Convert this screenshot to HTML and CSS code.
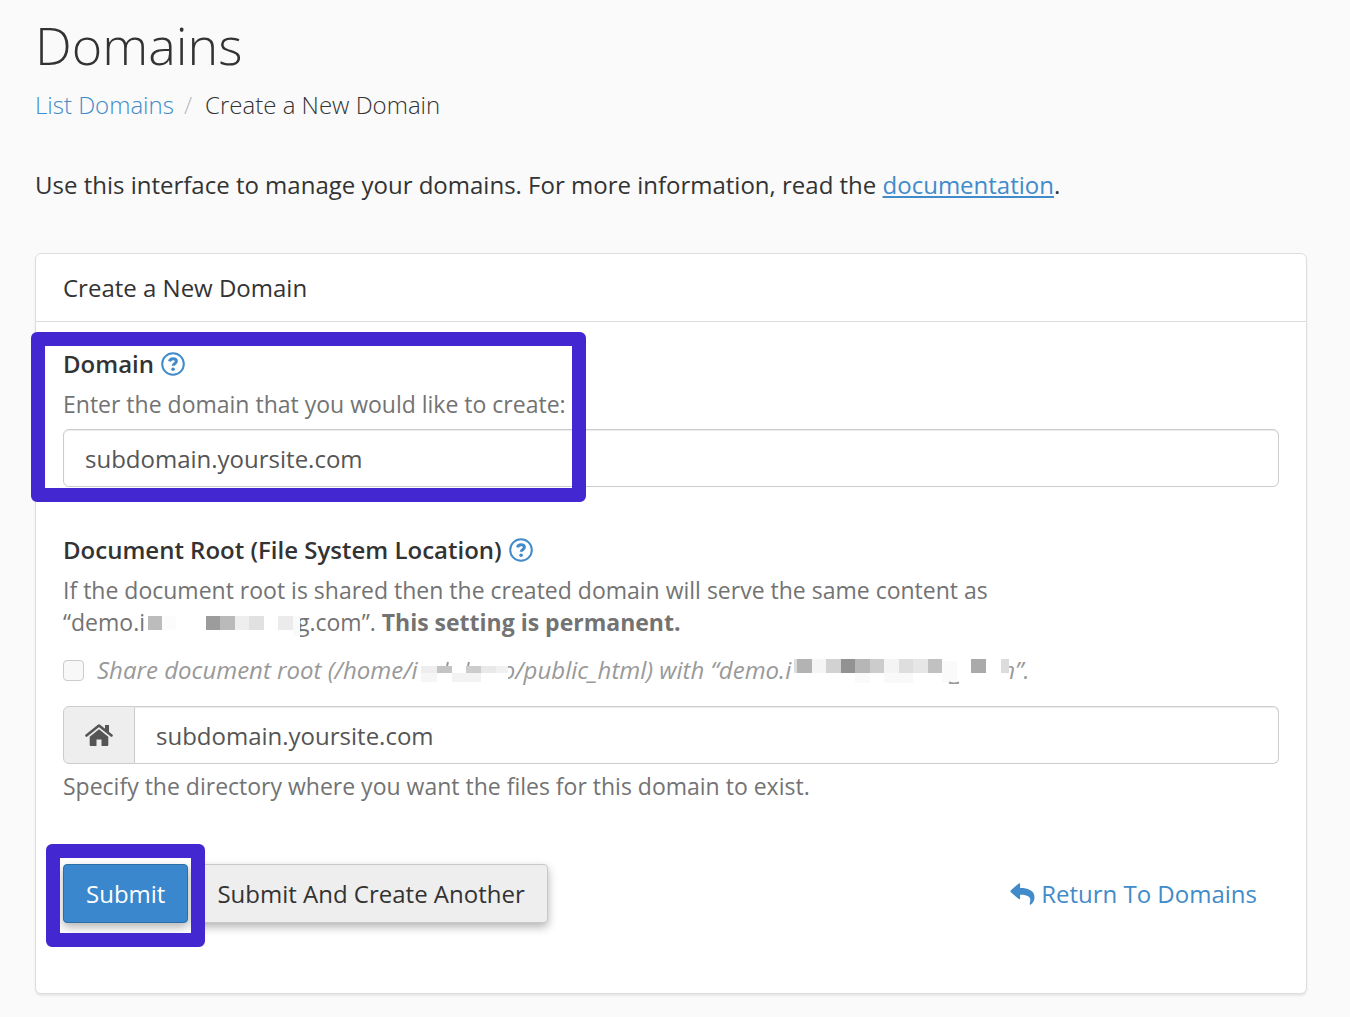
FILE: index.html
```html
<!DOCTYPE html>
<html lang="en">
<head>
  <meta charset="UTF-8" />
  <meta name="viewport" content="width=device-width, initial-scale=1.0" />
  <title>Domains</title>
  <link rel="stylesheet" href="styles.css">
</head>
<body>
  <svg class="sprite" aria-hidden="true">
    <symbol id="icon-help" viewBox="0 0 24 24">
      <circle cx="12" cy="12" r="10.8" fill="none" stroke="currentColor" stroke-width="2" />
      <path d="M8.500 9.400c.4-1.900 1.700-2.700 3.500-2.700 1.900 0 3.400 1 3.400 2.600 0 2.200-3.100 2.200-3.200 4.500" fill="none" stroke="currentColor" stroke-width="3" />
      <circle cx="12.100" cy="17.200" r="1.800" fill="currentColor" />
    </symbol>
  </svg>
  <main class="page">
    <h1>Domains</h1>
    <nav aria-label="Breadcrumb">
      <ol class="breadcrumb">
        <li><a href="#">List Domains</a></li>
        <li>Create a New Domain</li>
      </ol>
    </nav>
    <p class="intro">Use this interface to manage your domains. For more information, read the <a href="#">documentation</a>.</p>

    <section class="panel">
      <h2 class="panel-heading">Create a New Domain</h2>
      <form class="panel-body">
        <div class="form-group domain-group">
          <div class="label-row">
            <label for="domain">Domain</label>
            <a class="help" href="#" aria-label="Help: Domain"><svg><use href="#icon-help" /></svg></a>
          </div>
          <p class="help-text">Enter the domain that you would like to create:</p>
          <input class="form-control" type="text" id="domain" value="subdomain.yoursite.com" />
          <div class="highlight"></div>
        </div>

        <div class="form-group root-group">
          <div class="label-row">
            <label for="root">Document Root (File System Location)</label>
            <a class="help" href="#" aria-label="Help: Document Root"><svg><use href="#icon-help" /></svg></a>
          </div>
          <p class="help-text root-text">If the document root is shared then the created domain will serve the same content as<br />“demo.i<svg class="redact redact-site" viewBox="3 0 155 26" aria-hidden="true">
            <rect x="0" y="0" width="158" height="26" fill="#fff" />
            <rect x="6" y="3" width="14" height="14" fill="#bcbcbc" />
            <rect x="20" y="3" width="14" height="14" fill="#fcfcfc" />
            <rect x="64" y="3" width="14" height="14" fill="#9c9c9c" />
            <rect x="78" y="3" width="15" height="14" fill="#bababa" />
            <rect x="93" y="3" width="14" height="14" fill="#eee" />
            <rect x="107" y="3" width="15" height="14" fill="#e1e1e1" />
            <rect x="136" y="3" width="15" height="14" fill="#ebebeb" />
            <rect x="151" y="3" width="7" height="20" fill="#fafafa" />
          </svg>g.com”. <strong>This setting is permanent.</strong></p>
          <div class="check-row">
            <input type="checkbox" id="share" disabled />
            <label for="share">Share document root (/home/i<svg class="redact redact-home" viewBox="-2 0 90 26" aria-hidden="true">
              <rect x="-1" y="0" width="89" height="26" fill="#fff" />
              <path d="M27 8l1-4M48 8l1-4" stroke="#999" stroke-width="2" />
              <rect x="1" y="8" width="16" height="7" fill="#eee" />
              <rect x="17" y="8" width="15" height="7" fill="#c4c4c4" />
              <rect x="46" y="8" width="15" height="7" fill="#ccc" />
              <rect x="61" y="8" width="15" height="7" fill="#e9e9e9" />
              <rect x="76" y="8" width="12" height="7" fill="#f1f1f1" />
              <rect x="1" y="15" width="16" height="9" fill="#f6f6f6" />
              <rect x="32" y="15" width="29" height="9" fill="#f3f3f3" />
            </svg>o/public_html) with “demo.i<svg class="redact redact-demo" viewBox="-1 0 218 26" aria-hidden="true">
              <rect x="2" y="0" width="215" height="26" fill="#fff" />
              <rect x="2" y="1" width="3" height="14" fill="#ddd" />
              <rect x="5" y="1" width="15" height="14" fill="#b3b3b3" />
              <rect x="20" y="1" width="14" height="14" fill="#f5f5f5" />
              <rect x="34" y="1" width="15" height="14" fill="#d2d2d2" />
              <rect x="49" y="1" width="14" height="14" fill="#929292" />
              <rect x="63" y="1" width="15" height="14" fill="#b6b6b6" />
              <rect x="78" y="1" width="14" height="14" fill="#ccc" />
              <rect x="92" y="1" width="15" height="14" fill="#f4f4f4" />
              <rect x="107" y="1" width="14" height="14" fill="#dedede" />
              <rect x="121" y="1" width="15" height="14" fill="#e6e6e6" />
              <rect x="136" y="1" width="14" height="14" fill="#c1c1c1" />
              <rect x="179" y="1" width="15" height="14" fill="#aaa" />
              <rect x="209" y="1" width="8" height="14" fill="#dcdcdc" />
              <rect x="63" y="15" width="15" height="10" fill="#fafafa" />
              <rect x="92" y="15" width="29" height="10" fill="#f9f9f9" />
              <rect x="150" y="3" width="15" height="21" fill="#fafafa" />
              <path d="M157 24.500q5 2 10 0" fill="none" stroke="#999" stroke-width="2" />
            </svg>m”.</label>
          </div>
          <div class="input-group">
            <span class="addon">
              <svg class="icon-home" viewBox="0 0 28 24" aria-hidden="true">
                <path d="M1.500 12.500L14 2.500l12.500 10" fill="none" stroke="currentColor" stroke-width="2.600" stroke-linecap="round" stroke-linejoin="round" />
                <path d="M20 2h4v8l-4-3.200zM14 6.200l9.300 7.500V22q0 1-1 1h-5.800v-6.500h-5V23H5.700q-1 0-1-1v-8.300z" fill="currentColor" />
              </svg>
            </span>
            <input class="form-control" type="text" id="root" value="subdomain.yoursite.com" />
          </div>
          <p class="help-text">Specify the directory where you want the files for this domain to exist.</p>
        </div>

        <div class="actions">
          <div class="submit-wrap">
            <button class="btn btn-primary" type="submit">Submit</button>
            <div class="highlight"></div>
          </div>
          <button class="btn" type="button">Submit And Create Another</button>
          <a class="return" href="#">
            <svg viewBox="0 0 24 22" aria-hidden="true">
              <path d="M.4 7.300L8.300.4Q9.600-.4 9.600 1.200V5C18 5 24 7.500 24 14.500c0 3-1.600 5.600-3.600 7-.7.500-1.500 0-1.200-.9C21.500 13.500 17.500 11.800 9.600 11.700v3.600q0 1.600-1.300.8L.4 9.200q-.8-.9 0-1.900z" fill="currentColor" />
            </svg>
            Return To Domains
          </a>
        </div>
      </form>
    </section>
  </main>
</body>
</html>
```
FILE: styles.css
```css
:root {
  --text: #333;
  --muted: #737373;
  --link: #428bca;
  --border: #ccc;
  --mark: #4328d2;
}
* { box-sizing: border-box; }
body {
  margin: 0;
  background: #fafafa;
  color: var(--text);
  font-family: "Open Sans", "Noto Sans", sans-serif;
  font-size: 24px;
  line-height: 32px;
}
h1, h2, p, ol { margin: 0; }
a { color: var(--link); }
.sprite {
  position: absolute;
  width: 0;
  height: 0;
}
.page { padding: 11px 43px 22px 35px; }
h1 {
  font-size: 52px;
  line-height: 68px;
  font-weight: 300;
}
.breadcrumb {
  display: flex;
  margin-top: 10px;
  padding: 0;
  list-style: none;
  font-weight: 300;
}
.breadcrumb a { text-decoration: none; }
.breadcrumb li + li::before {
  content: "/";
  padding: 0 13px 0 10px;
  color: #bbb;
}
.intro { margin: 48px 0 52px; }
.panel {
  background: #fff;
  border: 1px solid #ddd;
  border-radius: 6px;
  box-shadow: 0 2px 2px rgba(0, 0, 0, 0.08);
}
.panel-heading {
  padding: 18px 27px 17px;
  border-bottom: 1px solid #ddd;
  font-size: 24px;
  line-height: 32px;
  font-weight: 400;
}
.panel-body { padding: 26px 27px 70px; }
.form-group { position: relative; }
.label-row {
  display: flex;
  align-items: center;
  gap: 7px;
  font-weight: 600;
}
.help { display: flex; }
.help svg {
  width: 24px;
  height: 24px;
}
.help-text {
  color: var(--muted);
  font-size: 23px;
}
.domain-group .help-text { margin: 8px 0 9px; }
.root-group { margin-top: 47px; }
.root-text { margin-top: 8px; }
.form-control {
  display: block;
  width: 100%;
  height: 58px;
  padding: 0 21px;
  border: 1px solid var(--border);
  border-radius: 6px;
  background: #fff;
  box-shadow: inset 0 1px 1px rgba(0, 0, 0, 0.08);
  color: #555;
  font: inherit;
}
.highlight {
  position: absolute;
  border: 14px solid var(--mark);
  border-radius: 6px;
  pointer-events: none;
}
.domain-group .highlight {
  top: -16px;
  left: -32px;
  width: 555px;
  height: 170px;
}
.check-row {
  display: flex;
  align-items: center;
  gap: 13px;
  margin: 15px 0 20px;
  color: #999;
  font-style: italic;
}
.check-row input {
  appearance: none;
  width: 21px;
  height: 21px;
  margin: 0;
  border: 1px solid var(--border);
  border-radius: 4px;
  background: #f8f8f8;
}
.redact {
  position: relative;
  height: 26px;
  vertical-align: -8px;
}
.check-row .redact { vertical-align: -5px; }
.redact-site {
  width: 155px;
  margin-right: -3px;
}
.redact-home {
  width: 90px;
  margin-right: -6px;
}
.redact-demo {
  width: 218px;
  margin-right: -15px;
}
.input-group { display: flex; }
.addon {
  display: flex;
  flex: none;
  align-items: center;
  justify-content: center;
  width: 72px;
  border: 1px solid var(--border);
  border-radius: 6px 0 0 6px;
  background: #eee;
  color: #555;
}
.icon-home {
  width: 28px;
  height: 24px;
}
.input-group .form-control {
  border-left: 0;
  border-radius: 0 6px 6px 0;
}
.input-group + .help-text { margin-top: 6px; }
.actions {
  display: flex;
  align-items: center;
  margin-top: 62px;
}
.submit-wrap {
  position: relative;
  margin-right: 6px;
}
.submit-wrap .highlight {
  top: -20px;
  left: -17px;
  width: 159px;
  height: 103px;
}
.btn {
  display: block;
  height: 59px;
  padding: 0 22px;
  border: 1px solid #c8c8c8;
  border-radius: 4px;
  background: #eee;
  box-shadow: 0 4px 10px rgba(0, 0, 0, 0.3);
  color: var(--text);
  font: inherit;
  cursor: pointer;
}
.btn-primary {
  border-color: #2a6fa8;
  background: #3a87cd;
  color: #fff;
}
.return {
  display: flex;
  align-items: center;
  gap: 6px;
  margin-left: auto;
  padding-right: 22px;
  text-decoration: none;
}
.return svg {
  width: 25px;
  height: 22px;
}
```
